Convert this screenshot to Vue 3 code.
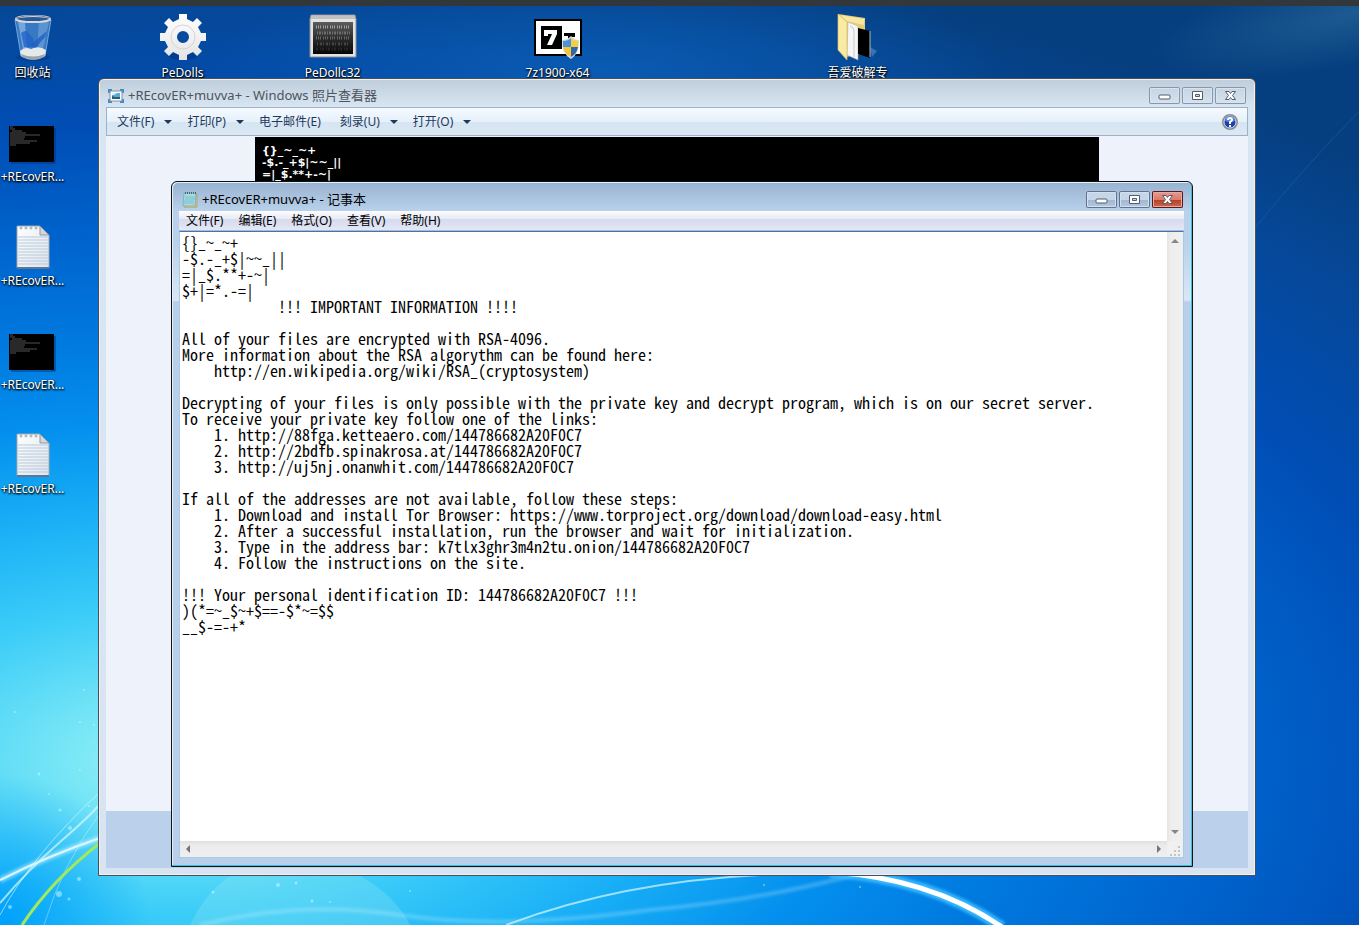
<script setup>
import { ref } from 'vue'

const shortcuts = [
  { id: 'bin', label: '回收站', icon: 'bin', col: 1, row: 1 },
  { id: 'pedolls', label: 'PeDolls', icon: 'gear', col: 3, row: 1 },
  { id: 'pedollc', label: 'PeDollc32', icon: 'console', col: 5, row: 1 },
  { id: '7z', label: '7z1900-x64', icon: 'zip', col: 8, row: 1 },
  { id: 'folder', label: '吾爱破解专', icon: 'folder', col: 12, row: 1 },
  { id: 'img1', label: '+REcovER...', icon: 'image', col: 1, row: 2 },
  { id: 'txt1', label: '+REcovER...', icon: 'text', col: 1, row: 3 },
  { id: 'img2', label: '+REcovER...', icon: 'image', col: 1, row: 4 },
  { id: 'txt2', label: '+REcovER...', icon: 'text', col: 1, row: 5 },
]

const viewerMenu = [
  { label: '文件(F)', arrow: true },
  { label: '打印(P)', arrow: true },
  { label: '电子邮件(E)', arrow: false },
  { label: '刻录(U)', arrow: true },
  { label: '打开(O)', arrow: true },
]

const notepadMenu = ['文件(F)', '编辑(E)', '格式(O)', '查看(V)', '帮助(H)']

const photoText = ['{}_~_~+', '-$.-_+$|~~_||', '=|_$.**+-~|'].join('\n')

const note = ref(
  [
    '{}_~_~+',
    '-$.-_+$|~~_||',
    '=|_$.**+-~|',
    '$+|=*.-=|',
    '            !!! IMPORTANT INFORMATION !!!!',
    '',
    'All of your files are encrypted with RSA-4096.',
    'More information about the RSA algorythm can be found here:',
    '    http://en.wikipedia.org/wiki/RSA_(cryptosystem)',
    '',
    'Decrypting of your files is only possible with the private key and decrypt program, which is on our secret server.',
    'To receive your private key follow one of the links:',
    '    1. http://88fga.ketteaero.com/144786682A20F0C7',
    '    2. http://2bdfb.spinakrosa.at/144786682A20F0C7',
    '    3. http://uj5nj.onanwhit.com/144786682A20F0C7',
    '',
    'If all of the addresses are not available, follow these steps:',
    '    1. Download and install Tor Browser: https://www.torproject.org/download/download-easy.html',
    '    2. After a successful installation, run the browser and wait for initialization.',
    '    3. Type in the address bar: k7tlx3ghr3m4n2tu.onion/144786682A20F0C7',
    '    4. Follow the instructions on the site.',
    '',
    '!!! Your personal identification ID: 144786682A20F0C7 !!!',
    ')(*=~_$~+$==-$*~=$$',
    '__$-=-+*',
  ].join('\n'),
)

const sparkles = [
  [80, 722, 1], [94, 725, 1], [80, 770, 1], [39, 774, 1.5], [60, 810, 1.5], [49, 794, 1],
  [89, 806, 1], [70, 828, 2], [59, 894, 3], [79, 879, 2], [69, 899, 1.5], [10, 907, 2],
  [278, 885, 2], [296, 883, 1.5], [312, 901, 1.5], [330, 902, 1], [410, 891, 1],
  [213, 892, 1.5], [764, 885, 1], [860, 887, 1], [15, 712, 1], [84, 690, 1],
]
</script>

<template>
  <main class="desktop">
    <svg class="wallpaper" viewBox="0 0 1359 925" preserveAspectRatio="none" aria-hidden="true">
      <defs>
        <radialGradient id="sky" gradientUnits="userSpaceOnUse" cx="0" cy="0" r="840" gradientTransform="translate(180 760) scale(2 1)">
          <stop offset="0" stop-color="#a4f0f2" />
          <stop offset=".06" stop-color="#7ce8f6" />
          <stop offset=".18" stop-color="#3ccdf8" />
          <stop offset=".3" stop-color="#18aef6" />
          <stop offset=".4" stop-color="#0490ee" />
          <stop offset=".5" stop-color="#007adf" />
          <stop offset=".62" stop-color="#0064ce" />
          <stop offset=".76" stop-color="#004db4" />
          <stop offset=".86" stop-color="#054aa0" />
          <stop offset="1" stop-color="#063f80" />
        </radialGradient>
        <radialGradient id="corner" gradientUnits="userSpaceOnUse" cx="0" cy="925" r="150">
          <stop offset="0" stop-color="#00a0fa" />
          <stop offset="1" stop-color="#00a0fa" stop-opacity="0" />
        </radialGradient>
        <radialGradient id="topglow" gradientUnits="userSpaceOnUse" cx="0" cy="0" r="100" gradientTransform="translate(600 70) scale(4 1)">
          <stop offset="0" stop-color="#0c62ba" stop-opacity=".7" />
          <stop offset="1" stop-color="#0c62ba" stop-opacity="0" />
        </radialGradient>
        <radialGradient id="wisp" gradientUnits="userSpaceOnUse" cx="0" cy="0" r="50" gradientTransform="translate(1350 14) rotate(-12) scale(4 1)">
          <stop offset="0" stop-color="#3c82a8" stop-opacity=".4" />
          <stop offset="1" stop-color="#3c82a8" stop-opacity="0" />
        </radialGradient>
        <filter id="soft"><feGaussianBlur stdDeviation="1.5" /></filter>
      </defs>
      <rect width="1359" height="925" fill="url(#sky)" />
      <rect width="300" height="200" y="725" fill="url(#corner)" />
      <rect width="1000" height="170" fill="url(#topglow)" />
      <rect x="1100" width="259" height="160" fill="url(#wisp)" />
      <path d="M1255 228Q1310 160 1359 112" fill="none" stroke="#2f76b4" opacity=".35" />
      <path d="M190 925Q205 893 230 876H360Q395 895 410 925z" fill="#9feaf0" opacity=".25" />
      <g fill="none" stroke="#d8f8ff">
        <path d="M0 880Q50 855 100 838" stroke-width="6" opacity=".5" filter="url(#soft)" />
        <path d="M0 880Q50 855 100 838" stroke-width="2" />
        <path d="M0 903Q30 868 60 842T100 804" stroke-width="2" opacity=".7" />
        <path d="M0 915Q32 855 100 792" opacity=".6" />
        <path d="M44 925Q62 865 100 813" opacity=".4" />
        <path d="M200 925Q300 900 400 915T650 910Q760 900 850 876" stroke-width="4" opacity=".25" filter="url(#soft)" />
        <path d="M506 925Q620 882 760 875" stroke-width="2" opacity=".7" />
        <path d="M830 872Q930 878 1002 927" stroke="#38b8ff" stroke-width="11" filter="url(#soft)" />
        <path d="M830 872Q930 878 1002 927" stroke="#fff" stroke-width="5" />
      </g>
      <path d="M22 925Q52 880 100 843" fill="none" stroke="#a0e860" stroke-width="3" />
      <circle v-for="(s, i) in sparkles" :key="i" :cx="s[0]" :cy="s[1]" :r="s[2]" fill="#d4fbff" opacity=".5" />
    </svg>
    <div class="topedge"></div>

    <nav class="icons" aria-label="桌面">
      <a v-for="s in shortcuts" :key="s.id" href="#" class="shortcut" :class="['col' + s.col, 'row' + s.row]">
        <svg v-if="s.icon === 'bin'" viewBox="0 0 48 48" width="48" height="48" aria-hidden="true">
          <ellipse cx="24" cy="44" rx="17" ry="4" fill="#003080" opacity=".4" />
          <path d="M6 7L12 43Q24 50 36 43L42 7z" fill="#5a9ade" fill-opacity=".6" stroke="#a9cdf0" stroke-opacity=".6" />
          <path d="M9 9L14 36L18 36L16 9z" fill="#d8ebff" opacity=".4" />
          <path d="M30 9L40 9L34 36L28 36z" fill="#cbe3fb" opacity=".25" />
          <path d="M12 20Q18 15 21 22Q27 26 24 34H15z" fill="#2163c8" opacity=".8" />
          <path d="M22 32Q30 24 38 18L36 24Q30 30 27 36z" fill="#1c5cc0" opacity=".75" />
          <path d="M11 38Q16 33 22 36Q30 32 37 37L36 43Q24 49 12 43z" fill="#e4e9ea" />
          <path d="M12 41Q24 46 36 41L35 44Q24 50 13 44z" fill="#9ba5aa" />
          <ellipse cx="24" cy="6" rx="17" ry="3" fill="#27589a" stroke="#d6dade" stroke-width="2" />
          <path d="M7 5Q24 0 41 5" fill="none" stroke="#777e86" />
        </svg>
        <svg v-else-if="s.icon === 'gear'" viewBox="0 0 48 48" width="48" height="48" aria-hidden="true">
          <defs><linearGradient id="gearfill" x2="0" y2="1"><stop stop-color="#fff" /><stop offset="1" stop-color="#e3e3e3" /></linearGradient></defs>
          <ellipse cx="24" cy="43" rx="14" ry="4" fill="#002a70" opacity=".4" />
          <path fill="url(#gearfill)" fill-rule="evenodd" d="M20 1h8v5l6 3 4-4 5 5-4 4 3 6h5v8h-5l-3 6 4 4-5 5-4-4-6 3v5h-8v-5l-6-3-4 4-5-5 4-4-3-6H1v-8h5l3-6-4-4 5-5 4 4 6-3zM24 18a6 6 0 1 0 0 12a6 6 0 1 0 0-12z" />
          <circle cx="24" cy="24" r="12" fill="none" stroke="#d4d4d4" />
        </svg>
        <svg v-else-if="s.icon === 'console'" viewBox="0 0 48 48" width="48" height="48" aria-hidden="true">
          <defs><linearGradient id="screen" x2="0" y2="1"><stop stop-color="#5c5c5c" /><stop offset=".5" stop-color="#2d2d2d" /><stop offset="1" stop-color="#050505" /></linearGradient></defs>
          <path d="M2 2H46L47 6V44H1V6z" fill="#e3e3e3" stroke="#8e8e8e" />
          <path d="M2 3H46V6H2z" fill="#bfc1c3" />
          <rect x="4" y="9" width="40" height="32" fill="url(#screen)" />
          <g fill="none" stroke="#a0a0a0" stroke-width="3">
            <path d="M7 14H42" stroke-dasharray="1 1 1 1 1 2" />
            <path d="M8 20H41" stroke-dasharray="1 1 2 1" opacity=".5" />
            <path d="M7 25H42" stroke-dasharray="1 1 1 1 1 2" opacity=".5" />
            <path d="M8 31H41" stroke-dasharray="1 2 2 1" opacity=".3" />
            <path d="M7 36H42" stroke-dasharray="2 2 1 1" opacity=".15" />
          </g>
        </svg>
        <svg v-else-if="s.icon === 'zip'" viewBox="0 0 48 48" width="48" height="48" aria-hidden="true">
          <rect x="1" y="7" width="46" height="35" fill="#fff" stroke="#000" stroke-width="2" />
          <path d="M7 13H28V36H7z" />
          <path d="M10 17H23V21L18 32H13L18 21H14V23H10z" fill="#fff" />
          <path d="M30 20H41V24H37L34 27V23H30z" />
          <path d="M28 27Q33 27 37 23Q41 27 45 27Q46 40 37 46Q27 40 28 27z" fill="#d4dbe2" />
          <path d="M29 28Q34 28 37 25V34H29z" fill="#4a92d8" />
          <path d="M37 25Q40 28 44 28V34H37z" fill="#f6cd43" />
          <path d="M29 34H37V44Q30 41 29 34z" fill="#f3c536" />
          <path d="M37 34H44Q43 41 37 44z" fill="#2c68ad" />
        </svg>
        <svg v-else-if="s.icon === 'folder'" viewBox="0 0 48 48" width="48" height="48" aria-hidden="true">
          <path d="M36 34L43 38L38 44z" fill="#8fc4ee" opacity=".35" />
          <path d="M4 1L31 5V40L12 44z" fill="#e7cd73" />
          <path d="M6 2L30 6V12L13 8z" fill="#f6e8a4" />
          <path d="M14 9L24 13V47L13 42z" fill="#f6f6f7" stroke="#aaa" stroke-width=".5" />
          <path d="M16 13Q20 14 20 18V44" fill="none" stroke="#c5c9ce" />
          <path d="M24 15L36 18V45L24 41z" />
          <path d="M36 18V44" stroke="#b7b9bd" />
          <path d="M4 1L13 9V47L4 37z" fill="#f9eba4" stroke="#d8bd61" stroke-width=".7" />
        </svg>
        <svg v-else-if="s.icon === 'image'" viewBox="0 0 48 48" width="48" height="48" aria-hidden="true">
          <rect x="0" y="9" width="45" height="36" />
          <path d="M46 11V46H2" fill="none" stroke="#00327c" />
          <path d="M1 10H4M1 12H6M3 14H13M1 16H17M1 18H31M1 20H16M1 22H15M1 24H28M1 26H21M1 28H7" stroke="#8b8b8b" stroke-width=".6" />
        </svg>
        <svg v-else viewBox="0 0 48 48" width="48" height="48" aria-hidden="true">
          <defs><linearGradient id="paper" x2="1" y2="1"><stop stop-color="#fff" /><stop offset="1" stop-color="#dfe2ee" /></linearGradient></defs>
          <path d="M8 5H31L40 14V47H8z" fill="url(#paper)" stroke="#9ba7b1" />
          <path d="M8 47H40" stroke="#5c7891" stroke-width="2" />
          <path d="M9 16H39M9 19H39M9 22H39M9 25H39M9 28H39M9 31H39M9 34H39M9 37H39M9 40H39M9 43H39" stroke="#b5cbd9" />
          <path d="M31 5L40 14H31z" fill="#d3d7dc" stroke="#8e989f" />
          <g fill="#fff" stroke="#99a2a8"><circle cx="12" cy="7" r="1" /><circle cx="17" cy="7" r="1" /><circle cx="22" cy="7" r="1" /><circle cx="27" cy="7" r="1" /></g>
        </svg>
        <span>{{ s.label }}</span>
      </a>
    </nav>

    <section class="window viewer" aria-label="Windows 照片查看器">
      <header class="titlebar">
        <svg class="appicon" viewBox="0 0 16 16" width="16" height="16" aria-hidden="true">
          <path d="M1 5V2H4M12 2H15V5M15 11V14H12M4 14H1V11" fill="none" stroke="#3a8cca" stroke-width="2" />
          <rect x="2" y="3" width="12" height="10" fill="#fff" stroke="#8493a1" />
          <rect x="4" y="5" width="8" height="6" fill="#59abd8" />
          <path d="M4 8L7 9L12 9V11H4z" fill="#24627a" />
          <path d="M4 5H9L6 7H4z" fill="#d9f1fc" />
        </svg>
        <h1>+REcovER+muvva+ - Windows 照片查看器</h1>
        <div class="controls">
          <button type="button" aria-label="最小化"><svg viewBox="0 0 31 17" width="31" height="17"><rect x="10" y="8" width="11" height="4" rx="1" fill="#fff" stroke="#535b6b" /></svg></button>
          <button type="button" aria-label="最大化"><svg viewBox="0 0 31 17" width="31" height="17"><path fill-rule="evenodd" d="M10.5 4.5h10v8h-10zM13.5 7.5h4v2h-4z" fill="#fff" stroke="#535b6b" /></svg></button>
          <button type="button" aria-label="关闭"><svg viewBox="0 0 31 17" width="31" height="17"><path d="M10.5 4.5h3.500l1.500 2 1.500-2h3.500l-3 4 3 4h-3.500l-1.500-2-1.500 2h-3.500l3-4z" fill="#fff" stroke="#535b6b" /></svg></button>
        </div>
      </header>
      <div class="toolbar">
        <button v-for="m in viewerMenu" :key="m.label" type="button" :class="{ plain: !m.arrow }">
          {{ m.label }}<i v-if="m.arrow" class="caret"></i>
        </button>
        <button type="button" class="help" aria-label="帮助">
          <svg viewBox="0 0 16 16" width="16" height="16">
            <circle cx="8" cy="8" r="7" fill="#1c3fae" stroke="#8a8d92" stroke-width="2" />
            <circle cx="8" cy="8" r="6" fill="none" stroke="#d4dae6" />
            <path d="M3 7A5 5 0 0 1 13 7Q8 9 3 7z" fill="#5b86dc" />
            <path d="M6 6Q6 4 8 4T10 6Q10 7 8 8V10M8 11V13" fill="none" stroke="#fff" stroke-width="2" />
          </svg>
        </button>
      </div>
      <div class="stage">
        <div class="photo">{{ photoText }}</div>
      </div>
      <div class="playbar"></div>
    </section>

    <section class="window notepad" aria-label="记事本">
      <header class="titlebar">
        <svg class="appicon" viewBox="0 0 16 16" width="16" height="16" aria-hidden="true">
          <path d="M3 2H15V15L12 16H3z" fill="#d4c58e" stroke="#a0905c" stroke-width=".6" />
          <path d="M2 1H14L13 14H1z" fill="#a5dbe2" stroke="#6ba7b4" stroke-width=".7" />
          <path d="M3 5H13M3 7H13M2 9H12M2 11H12" stroke="#6cb5c3" stroke-width=".7" />
          <path d="M3 1H14" stroke="#4d6672" stroke-width="2" stroke-dasharray="1 1" />
        </svg>
        <h2>+REcovER+muvva+ - 记事本</h2>
        <div class="controls">
          <button type="button" aria-label="最小化"><svg viewBox="0 0 31 17" width="31" height="17"><rect x="10" y="8" width="11" height="4" rx="1" fill="#fff" stroke="#535b6b" /></svg></button>
          <button type="button" aria-label="最大化"><svg viewBox="0 0 31 17" width="31" height="17"><path fill-rule="evenodd" d="M10.5 4.5h10v8h-10zM13.5 7.5h4v2h-4z" fill="#fff" stroke="#535b6b" /></svg></button>
          <button type="button" class="close" aria-label="关闭"><svg viewBox="0 0 31 17" width="31" height="17"><path d="M10.5 4.5h3.500l1.500 2 1.500-2h3.500l-3 4 3 4h-3.500l-1.500-2-1.500 2h-3.500l3-4z" fill="#fff" stroke="#535b6b" /></svg></button>
        </div>
      </header>
      <div class="menubar">
        <button v-for="m in notepadMenu" :key="m" type="button">{{ m }}</button>
      </div>
      <div class="editor">
        <textarea v-model="note" aria-label="文本" wrap="off" spellcheck="false"></textarea>
        <div class="vbar">
          <button type="button" aria-label="向上滚动"><i class="tri up"></i></button>
          <button type="button" aria-label="向下滚动"><i class="tri down"></i></button>
        </div>
        <div class="hbar">
          <button type="button" aria-label="向左滚动"><i class="tri left"></i></button>
          <button type="button" aria-label="向右滚动"><i class="tri right"></i></button>
        </div>
        <svg class="grip" viewBox="0 0 16 16" width="16" height="16" aria-hidden="true">
          <path d="M11 5h2v2h-2zM7 9h2v2H7zM11 9h2v2h-2zM3 13h2v2H3zM7 13h2v2H7zM11 13h2v2h-2z" fill="#c4c4c4" />
        </svg>
      </div>
    </section>
  </main>
</template>

<style>
body {
  margin: 0;
}
</style>

<style scoped>
.desktop {
  position: relative;
  height: 100vh;
  min-height: 700px;
  overflow: hidden;
  background: #0064d0;
  font: 12px/16px "Noto Sans", "Noto Sans CJK SC", sans-serif;
}
button {
  padding: 0;
  border: 0;
  background: none;
  font: inherit;
  color: inherit;
}
.wallpaper {
  position: absolute;
  width: 100%;
  height: 100%;
}
.topedge {
  position: relative;
  height: 6px;
  background: #32373b;
}
.icons {
  position: relative;
  display: grid;
  grid-template-columns: repeat(12, 75px);
  grid-auto-rows: 104px;
  margin: 7px 0 0 -5px;
}
.shortcut {
  display: flex;
  flex-direction: column;
  align-items: center;
  gap: 4px;
  color: #fff;
  text-decoration: none;
  white-space: nowrap;
  text-shadow: 1px 1px 2px #000, 0 1px 2px #000;
}
.col1 { grid-column: 1; }
.col3 { grid-column: 3; }
.col5 { grid-column: 5; }
.col8 { grid-column: 8; }
.col12 { grid-column: 12; }
.row1 { grid-row: 1; }
.row2 { grid-row: 2; }
.row3 { grid-row: 3; }
.row4 { grid-row: 4; }
.row5 { grid-row: 5; }

.window {
  position: absolute;
  box-sizing: border-box;
  display: flex;
  flex-direction: column;
  padding: 0 7px 7px;
  border-radius: 6px 6px 0 0;
}
.viewer {
  inset: 78px 103px 49px 98px;
  border: 1px solid #4c4f54;
  background: linear-gradient(#bfccda, #d8e5f2 28px, #d8e4f1);
  box-shadow: inset 0 0 0 1px #eaf1f8;
}
.titlebar {
  display: flex;
  align-items: center;
  height: 28px;
  padding: 5px 2px 0;
  box-sizing: border-box;
}
.appicon {
  margin-right: 4px;
}
h1,
h2 {
  flex: 1;
  margin: 0;
  padding-bottom: 2px;
  font: inherit;
  font-size: 13px;
  color: #000;
}
h1 {
  color: #4d545c;
}
.controls {
  display: flex;
  gap: 2px;
}
.controls button {
  display: block;
  box-sizing: border-box;
  width: 31px;
  height: 17px;
  border-radius: 2px;
  box-shadow: inset 0 0 0 1px #8797ab, inset 0 0 0 2px #dbe4ee;
}
.controls svg {
  display: block;
}
.toolbar {
  display: flex;
  align-items: center;
  gap: 15px;
  height: 29px;
  box-sizing: border-box;
  padding: 0 9px 0 10px;
  border: 1px solid #9fb1c6;
  background: linear-gradient(#f5faff, #e5f0fa 14px, #d6e5f3 14px, #dce8f3);
  color: #1e395b;
}
.toolbar button {
  display: flex;
  align-items: center;
  gap: 10px;
}
.toolbar .plain {
  padding-right: 4px;
}
.toolbar .help {
  margin-left: auto;
}
.caret {
  border: 4px solid transparent;
  border-top-color: #1e395b;
  border-bottom: 0;
}
.stage {
  flex: 1;
  min-height: 0;
  padding: 1px 149px 0;
  background: #edf2fb;
}
.photo {
  height: 100%;
  box-sizing: border-box;
  padding: 8px 7px;
  background: #000;
  color: #fff;
  font: bold 11px/12px "DejaVu Sans", sans-serif;
  white-space: pre;
}
.playbar {
  height: 57px;
  background: #bbd0ea;
}

.notepad {
  inset: 181px 166px 58px 171px;
  border: 1px solid #101418;
  background: linear-gradient(#98b3d1, #b9d1ea 29px, #b9d1ea 60px, #d9e7f5 118px, #b9cfe9 120px);
  box-shadow: inset -1px -1px #38bfdb, inset 1px 1px #e4eef8;
  padding: 0 8px 8px 7px;
}
.notepad .titlebar {
  height: 29px;
  padding: 6px 1px 0 3px;
}
.notepad .controls button {
  background: linear-gradient(#c5d6e8 50%, #9eb6d1 50%, #b7cbe2);
  box-shadow: inset 0 0 0 1px #5f7390, inset 0 0 0 2px #d3e0ee;
}
.notepad .controls .close {
  background: linear-gradient(#e3a093, #d87c6c 50%, #b93a22 50%, #d06d50);
  box-shadow: inset 0 0 0 1px #571a22, inset 0 0 0 2px #e9aa9d;
}
.menubar {
  display: flex;
  gap: 15px;
  height: 20px;
  box-sizing: border-box;
  padding: 0 7px;
  border-bottom: 1px solid #b5b7cc;
  background: linear-gradient(#fcfdff, #e7eaf5 8px, #d5daed 8px, #e3e7f6);
}
.editor {
  flex: 1;
  min-height: 0;
  display: grid;
  grid-template: minmax(0, 1fr) 16px / minmax(0, 1fr) 16px;
  border: 1px solid #a6cbe6;
  border-top-color: #3e78ac;
  background: #f0f0f0;
}
textarea {
  display: block;
  width: 100%;
  height: 100%;
  box-sizing: border-box;
  margin: 0;
  padding: 2px;
  border: 0;
  outline: 0;
  resize: none;
  overflow: hidden;
  background: #fff;
  color: #000;
  font: 16px/16px "Noto Sans Mono CJK SC", "Liberation Mono", monospace;
  white-space: pre;
}
.vbar,
.hbar {
  display: flex;
  justify-content: space-between;
}
.vbar {
  flex-direction: column;
  padding: 1px 0;
  background: linear-gradient(90deg, #e4e4e4, #eee 4px, #f0f0f0);
}
.hbar {
  background: linear-gradient(#dfdfdf, #ebebeb 4px, #efefef);
}
.vbar button,
.hbar button {
  display: grid;
  place-items: center;
  width: 16px;
  height: 16px;
}
.tri {
  border: 4px solid transparent;
}
.up { border-top: 0; border-bottom-color: #858585; }
.down { border-bottom: 0; border-top-color: #858585; }
.left { border-left: 0; border-right-color: #757575; }
.right { border-right: 0; border-left-color: #757575; }
</style>
